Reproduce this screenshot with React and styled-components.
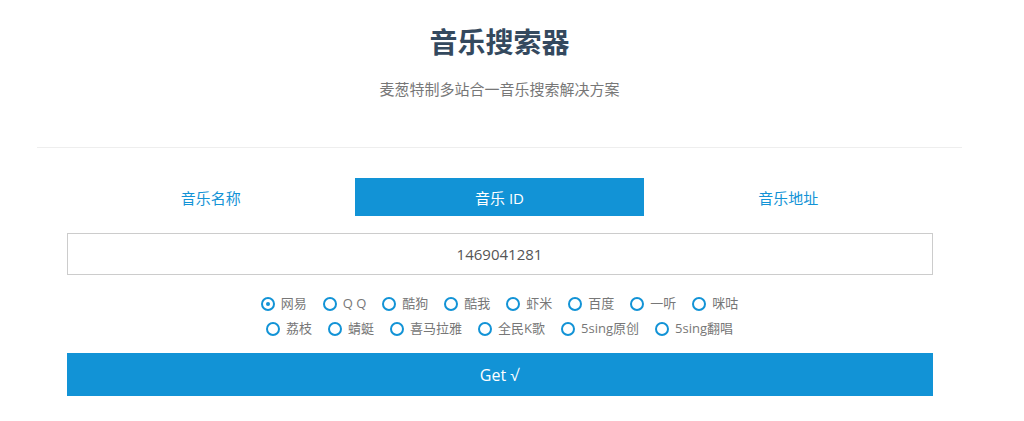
import React from "react";
import styled, { createGlobalStyle } from "styled-components";

const Global = createGlobalStyle`
  body { margin: 0; background: #fff; font-family: "Open Sans", "Noto Sans CJK SC", sans-serif; }
`;

const Page = styled.div`
  width: 999px;
  display: flex;
  flex-direction: column;
  align-items: center;
`;

const Header = styled.header`
  width: 925px;
  text-align: center;
  padding-top: 23px;
  height: 148px;
  box-sizing: border-box;
  border-bottom: 1px solid #eee;
`;

const Title = styled.h1`
  margin: 0;
  font-size: 28px;
  line-height: 38px;
  font-weight: bold;
  color: #34495e;
`;

const Sub = styled.p`
  margin: 17px 0 0;
  font-size: 15px;
  color: #777;
`;

const Main = styled.div`
  width: 866px;
  margin-top: 30px;
`;

const Tabs = styled.div`
  display: grid;
  grid-template-columns: repeat(3, 1fr);
  height: 38px;
`;

const Tab = styled.div`
  display: flex;
  align-items: center;
  justify-content: center;
  font-size: 15px;
  color: ${p => (p.$active ? "#fff" : "#1293d6")};
  background: ${p => (p.$active ? "#1293d6" : "transparent")};
`;

const Input = styled.div`
  margin-top: 17px;
  height: 42px;
  border: 1px solid #ccc;
  box-sizing: border-box;
  display: flex;
  align-items: center;
  justify-content: center;
  font-size: 15px;
  color: #555;
`;

const Radios = styled.div`
  margin-top: 20px;
  display: flex;
  flex-direction: column;
  align-items: center;
  gap: 8px;
`;

const Row = styled.div`
  display: flex;
  gap: 16px;
`;

const Radio = styled.label`
  display: flex;
  align-items: center;
  gap: 6px;
  font-size: 13px;
  color: #777;
  line-height: 17px;
`;

const Dot = styled.span`
  width: 10px;
  height: 10px;
  border: 2px solid #1293d6;
  border-radius: 50%;
  display: flex;
  align-items: center;
  justify-content: center;
  &::after {
    content: "";
    width: 4px;
    height: 4px;
    border-radius: 50%;
    background: ${p => (p.$on ? "#1293d6" : "transparent")};
  }
`;

const Button = styled.div`
  margin-top: 16px;
  height: 43px;
  background: #1293d6;
  color: #fff;
  font-size: 16px;
  display: flex;
  align-items: center;
  justify-content: center;
`;

const row1 = ["网易", "Q Q", "酷狗", "酷我", "虾米", "百度", "一听", "咪咕"];
const row2 = ["荔枝", "蜻蜓", "喜马拉雅", "全民K歌", "5sing原创", "5sing翻唱"];

export default function App() {
  return (
    <Page>
      <Global />
      <Header>
        <Title>音乐搜索器</Title>
        <Sub>麦葱特制多站合一音乐搜索解决方案</Sub>
      </Header>
      <Main>
        <Tabs>
          <Tab>音乐名称</Tab>
          <Tab $active>音乐 ID</Tab>
          <Tab>音乐地址</Tab>
        </Tabs>
        <Input>1469041281</Input>
        <Radios>
          <Row>
            {row1.map((t, i) => (
              <Radio key={t}><Dot $on={i === 0} />{t}</Radio>
            ))}
          </Row>
          <Row>
            {row2.map(t => (
              <Radio key={t}><Dot />{t}</Radio>
            ))}
          </Row>
        </Radios>
        <Button>Get √</Button>
      </Main>
    </Page>
  );
}
